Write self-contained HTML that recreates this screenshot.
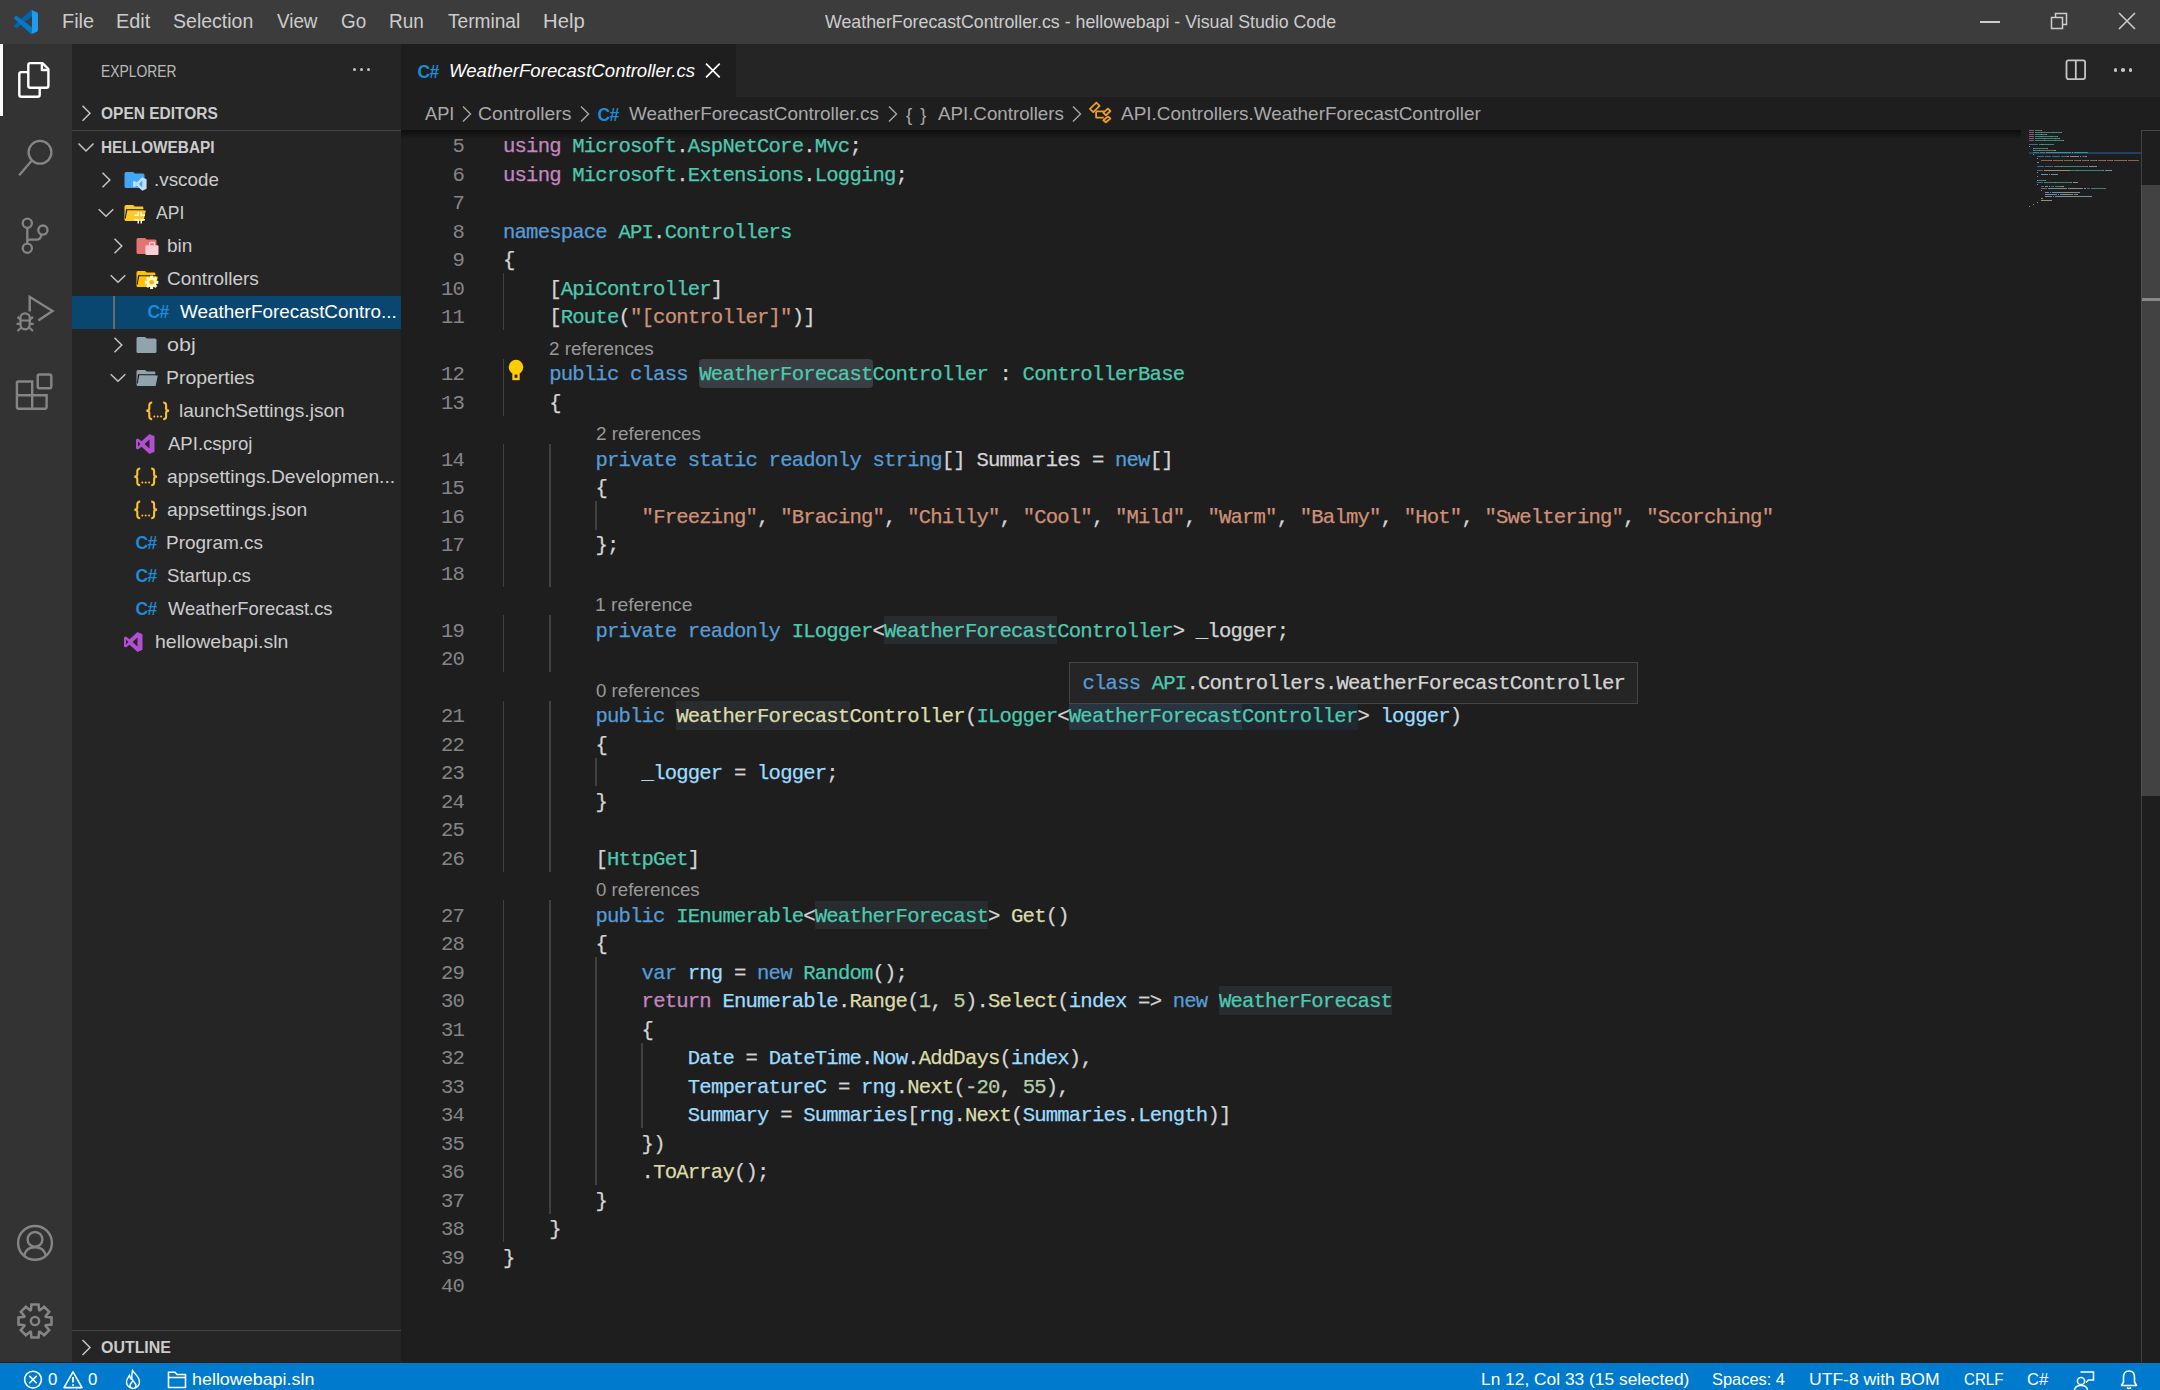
<!DOCTYPE html>
<html><head><meta charset="utf-8"><style>
*{margin:0;padding:0;box-sizing:border-box}
html,body{width:2160px;height:1390px;overflow:hidden;background:#1E1E1E;font-family:"Liberation Sans",sans-serif}
.abs{position:absolute}
.tx{position:absolute;line-height:0;white-space:pre;transform-origin:0 0}
.ln{position:absolute;left:401px;width:63px;text-align:right;font-family:"Liberation Mono",monospace;font-size:20.6px;letter-spacing:-0.81px;line-height:0;color:#858585}
.cl{position:absolute;font-family:"Liberation Mono",monospace;font-size:20.6px;letter-spacing:-0.8124px;line-height:0;color:#D4D4D4;white-space:pre;-webkit-text-stroke:0.25px currentColor}
.g{position:absolute;width:1.5px;height:28.5px;background:#404040}
.k{color:#569CD6} .p{color:#C586C0} .t{color:#4EC9B0} .s{color:#CE9178} .n{color:#B5CEA8} .f{color:#DCDCAA} .v{color:#9CDCFE}
.mm{position:absolute;height:1px;opacity:0.6}
</style></head><body>
<div class="abs" style="left:0;top:0;width:2160px;height:44px;background:#3C3C3C"></div>
<svg class="abs" style="left:14px;top:10px" width="24" height="24" viewBox="0 0 100 100"><path d="M96.46 10.8L75.86 .88C73.47-.27 70.62.21 68.75 2.08L1.3 63.58C-.52 65.24-.51 68.09 1.3 69.75L6.81 74.75C8.3 76.1 10.53 76.2 12.13 74.99L93.36 13.37C96.09 11.3 100 13.25 100 16.67V16.43C100 14.03 98.62 11.84 96.46 10.8Z" fill="#0065A9"/><path d="M96.46 89.2L75.86 99.12C73.47 100.27 70.62 99.79 68.75 97.92L1.3 36.42C-.52 34.76-.51 31.91 1.3 30.25L6.81 25.25C8.3 23.9 10.53 23.8 12.13 25.01L93.36 86.63C96.09 88.7 100 86.75 100 83.33V83.57C100 85.97 98.62 88.16 96.46 89.2Z" fill="#007ACC"/><path d="M75.86 99.13C73.47 100.27 70.62 99.79 68.75 97.92C71.06 100.22 75 98.59 75 95.33V4.67C75 1.41 71.06-.22 68.75 2.08C70.62.21 73.47-.27 75.86.87L96.46 10.78C98.62 11.82 100 14.01 100 16.41V83.59C100 85.99 98.62 88.18 96.46 89.22Z" fill="#1F9CF0"/></svg>
<div class="abs" style="left:1980px;top:21px;width:20px;height:1.5px;background:#CCCCCC"></div>
<svg class="abs" style="left:2049px;top:11px" width="20" height="20" viewBox="0 0 20 20"><path d="M2.5 6.5h11v11h-11z M6.5 6.5V2.5h11v11h-4" fill="none" stroke="#CCCCCC" stroke-width="1.5"/></svg>
<svg class="abs" style="left:2117px;top:11px" width="20" height="20" viewBox="0 0 20 20"><path d="M2 2L18 18M18 2L2 18" stroke="#CCCCCC" stroke-width="1.6"/></svg>
<div class="abs" style="left:0;top:44px;width:72px;height:1318px;background:#333333"></div>
<div class="abs" style="left:0;top:44px;width:3px;height:72px;background:#FFFFFF"></div>

<svg class="abs" style="left:0;top:0" width="72" height="1390" viewBox="0 0 72 1390">
 <g fill="none" stroke="#FFFFFF" stroke-width="2.4" stroke-linejoin="round">
  <path d="M28.3 72.1 H21.3 Q19.3 72.1 19.3 74.1 V94.7 Q19.3 96.7 21.3 96.7 H37.7 Q39.7 96.7 39.7 94.7 V87.8"/>
  <path d="M28.3 65.1 Q28.3 63.1 30.3 63.1 H42.5 L48.4 69 V85.8 Q48.4 87.8 46.4 87.8 H30.3 Q28.3 87.8 28.3 85.8 Z"/>
  <path d="M41.9 63.5 V70 H48.2"/>
 </g>
 <g fill="none" stroke="#858585" stroke-width="2.3">
  <circle cx="40" cy="152.3" r="11.4"/>
  <path d="M31.6 160.8 L19.2 175.2"/>
  <circle cx="27.3" cy="223.3" r="4.6"/>
  <circle cx="27.3" cy="248.3" r="4.6"/>
  <circle cx="42.9" cy="230.1" r="4.6"/>
  <path d="M27.3 228 V243.6"/>
  <path d="M27.3 241.5 Q27.3 239.6 30.5 239.6 H37.5 Q40.5 239.6 41.5 234.6"/>
  <path d="M29.7 311.5 V296.8 L52.5 311 L38.3 320.5" stroke-width="2.4"/>
  <path d="M20.5 317.5 a4.6 4.2 0 0 1 9.2 0 v7 a4.6 4.8 0 0 1 -9.2 0 z M19.4 320.5 H31" stroke-width="2.2"/>
  <path d="M17.5 317 L20.8 319.5 M33 317 L29.7 319.5 M16.6 323.8 H20.5 M29.7 323.8 H33.6 M17.5 331 L20.8 328 M33 331 L29.7 328" stroke-width="2.2"/>
  <path d="M18.5 381.5 H32.2 V408.7 H18.5 Q16.9 408.7 16.9 407.1 V383.1 Q16.9 381.5 18.5 381.5 Z M16.9 395.3 H46.6 V407.1 Q46.6 408.7 45 408.7 H32.2" stroke-width="2.4"/>
  <path d="M39.4 374.5 H49.6 Q51.3 374.5 51.3 376.2 V386.5 Q51.3 388.2 49.6 388.2 H39.4 Q37.7 388.2 37.7 386.5 V376.2 Q37.7 374.5 39.4 374.5 Z" stroke-width="2.4"/>
  <circle cx="35" cy="1242.9" r="16.9" stroke-width="2.4"/>
  <circle cx="35" cy="1239.4" r="7.4" stroke-width="2.4"/>
  <path d="M24.3 1255.5 Q26 1247.2 35 1247.2 Q44 1247.2 45.7 1255.5" stroke-width="2.4"/>
  <path d="M30.89 1310.15 L31.43 1304.48 L38.57 1304.48 L39.11 1310.15 L39.77 1310.42 L44.15 1306.79 L49.21 1311.85 L45.58 1316.23 L45.85 1316.89 L51.52 1317.43 L51.52 1324.57 L45.85 1325.11 L45.58 1325.77 L49.21 1330.15 L44.15 1335.21 L39.77 1331.58 L39.11 1331.85 L38.57 1337.52 L31.43 1337.52 L30.89 1331.85 L30.23 1331.58 L25.85 1335.21 L20.79 1330.15 L24.42 1325.77 L24.15 1325.11 L18.48 1324.57 L18.48 1317.43 L24.15 1316.89 L24.42 1316.23 L20.79 1311.85 L25.85 1306.79 L30.23 1310.42Z" stroke-width="2.5" stroke-linejoin="miter"/>
  <circle cx="35" cy="1321" r="4.1" stroke-width="2.4"/>
 </g>
</svg>
<div class="abs" style="left:72px;top:44px;width:329px;height:1318px;background:#252526"></div>

<div class="abs" style="left:352.7px;top:67.9px;width:3.6px;height:3.6px;border-radius:50%;background:#C5C5C5"></div><div class="abs" style="left:359.7px;top:67.9px;width:3.6px;height:3.6px;border-radius:50%;background:#C5C5C5"></div><div class="abs" style="left:366.7px;top:67.9px;width:3.6px;height:3.6px;border-radius:50%;background:#C5C5C5"></div>
<svg class="abs" style="left:76px;top:101px" width="20" height="24" viewBox="0 0 20 24"><path d="M6.5 4.8 L14 12.3 L6.5 19.8" fill="none" stroke="#C5C5C5" stroke-width="1.5"/></svg>
<div class="abs" style="left:72px;top:130px;width:329px;height:1px;background:#434344"></div>
<svg class="abs" style="left:76px;top:135px" width="20" height="24" viewBox="0 0 20 24"><path d="M2.5 8.5 L10 16 L17.5 8.5" fill="none" stroke="#C5C5C5" stroke-width="1.5"/></svg>
<div class="abs" style="left:72px;top:1330px;width:329px;height:1px;background:#434344"></div>
<svg class="abs" style="left:76px;top:1335px" width="20" height="24" viewBox="0 0 20 24"><path d="M6.5 5 L14 12.5 L6.5 20" fill="none" stroke="#C5C5C5" stroke-width="1.5"/></svg>

<div class="abs" style="left:401px;top:44px;width:1759px;height:53px;background:#252526"></div>
<div class="abs" style="left:401px;top:44px;width:335px;height:53px;background:#1E1E1E"></div>

<div class="tx" style="left:417.5px;top:71.74px;font-weight:bold;color:#1E8BD6;font-size:17.5px;letter-spacing:-0.6px">C#</div>
<svg class="abs" style="left:704px;top:61px" width="18" height="18" viewBox="0 0 18 18"><path d="M2 2.7 L15.7 16.3 M15.7 2.7 L2 16.3" stroke="#FFFFFF" stroke-width="1.7"/></svg>
<svg class="abs" style="left:2064px;top:58px" width="24" height="24" viewBox="0 0 24 24"><rect x="2.5" y="2.3" width="18.6" height="18.8" rx="2" fill="none" stroke="#C5C5C5" stroke-width="1.8"/><path d="M11.8 2.3 V21" stroke="#C5C5C5" stroke-width="1.8"/></svg>
<div class="abs" style="left:2113.75px;top:68.1px;width:3.6px;height:3.6px;border-radius:50%;background:#C5C5C5"></div><div class="abs" style="left:2121.20px;top:68.1px;width:3.6px;height:3.6px;border-radius:50%;background:#C5C5C5"></div><div class="abs" style="left:2128.65px;top:68.1px;width:3.6px;height:3.6px;border-radius:50%;background:#C5C5C5"></div>


<svg class="abs" style="left:460.5px;top:104px" width="12" height="20" viewBox="0 0 12 20"><path d="M2 2.5 L9.5 10 L2 17.5" fill="none" stroke="#A9A9A9" stroke-width="1.4"/></svg><svg class="abs" style="left:578.5px;top:104px" width="12" height="20" viewBox="0 0 12 20"><path d="M2 2.5 L9.5 10 L2 17.5" fill="none" stroke="#A9A9A9" stroke-width="1.4"/></svg>
<div class="tx" style="left:597.5px;top:114.74px;font-weight:bold;color:#1E8BD6;font-size:17.5px;letter-spacing:-0.6px">C#</div>
<svg class="abs" style="left:887px;top:104px" width="12" height="20" viewBox="0 0 12 20"><path d="M2 2.5 L9.5 10 L2 17.5" fill="none" stroke="#A9A9A9" stroke-width="1.4"/></svg>
<div class="tx" style="left:906px;top:114.62px;font-size:18.4px;color:#A9A9A9;letter-spacing:1.5px">{ }</div>
<svg class="abs" style="left:1071px;top:104px" width="12" height="20" viewBox="0 0 12 20"><path d="M2 2.5 L9.5 10 L2 17.5" fill="none" stroke="#A9A9A9" stroke-width="1.4"/></svg>
<svg class="abs" style="left:1080px;top:98px" width="50" height="30" viewBox="0 0 50 30" fill="none" stroke="#EE9D28" stroke-width="1.8" stroke-linejoin="round"><path d="M9.9 10.9 L16.4 4.7 L19.6 7.9 L13.3 14.2 Z"/><path d="M23.3 14.6 L27.9 10.6 L30.4 13 L25.9 17.4 Z"/><path d="M23.3 22.2 L27.8 18.6 L30.4 20.5 L25.9 24.3 Z"/><path d="M16.1 13.4 V19.6 H23.8 M16.1 13.4 H24"/></svg>
<div class="abs" style="left:401px;top:130px;width:1620px;height:9px;background:linear-gradient(rgba(0,0,0,0.55),rgba(0,0,0,0))"></div>

<div class="abs" style="left:72px;top:295.5px;width:329px;height:33px;background:#094771"></div>
<div class="abs" style="left:113px;top:295.5px;width:1.5px;height:33px;background:#6A6A6A"></div>
<svg class="abs" style="left:99.2px;top:168.0px" width="16" height="24" viewBox="0 0 16 24"><path d="M3.5 4.8 L10.8 12 L3.5 19.2" fill="none" stroke="#C5C5C5" stroke-width="1.5"/></svg>
<svg class="abs" style="left:123.5px;top:169.0px" width="26" height="24" viewBox="0 0 26 24"><path d="M2 2.9 H9 L10.8 4.6 H19 Q20.5 4.6 20.5 6.1 V17.5 Q20.5 19 19 19 H2 Q0.5 19 0.5 17.5 V4.4 Q0.5 2.9 2 2.9 Z" fill="#42A5F5"/><path d="M18.3 8.2 L22.6 10.2 V19.8 L18.3 21.8 L12.6 16.6 L10.3 18.3 L9 17.6 V12.4 L10.3 11.7 L12.6 13.4 Z M18.3 11.6 L15 15 L18.3 18.4 Z" fill="#BBDEFB" fill-rule="evenodd"/></svg>
<svg class="abs" style="left:95.8px;top:201.0px" width="20" height="24" viewBox="0 0 20 24"><path d="M2.7 8.2 L10 15.3 L17.3 8.2" fill="none" stroke="#C5C5C5" stroke-width="1.5"/></svg>
<svg class="abs" style="left:123.5px;top:202.0px" width="26" height="24" viewBox="0 0 26 24"><path d="M2 2.9 H9 L10.8 4.6 H18 Q19.4 4.6 19.4 6 V17.5 Q19.4 19 18 19 H2 Q0.5 19 0.5 17.5 V4.4 Q0.5 2.9 2 2.9 Z" fill="#FFCA28"/><path d="M21.5 7.9 H2.6 L1.5 16.5" fill="none" stroke="#1A1A1A" stroke-width="1.3"/><path d="M3.4 8.6 H21.8 L19.6 19 H1.3 Z" fill="#FFCA28"/><path d="M10.5 12.5 h3 v-2.5 h1.5 v4 h-4.5z M16.5 10 h1.5 v2.5 h3 v1.5 h-4.5z M10.5 17 h4.5 v4.5 h-1.5 v-3 h-3z M16.5 17 h4.5 v1.5 h-3 v3 h-1.5z" fill="#FFF8E1"/></svg>
<svg class="abs" style="left:111.2px;top:234.0px" width="16" height="24" viewBox="0 0 16 24"><path d="M3.5 4.8 L10.8 12 L3.5 19.2" fill="none" stroke="#C5C5C5" stroke-width="1.5"/></svg>
<svg class="abs" style="left:135.5px;top:235.0px" width="26" height="24" viewBox="0 0 26 24"><path d="M2 2.9 H9 L10.8 4.6 H19 Q20.5 4.6 20.5 6.1 V17.5 Q20.5 19 19 19 H2 Q0.5 19 0.5 17.5 V4.4 Q0.5 2.9 2 2.9 Z" fill="#E57373"/><rect x="9.4" y="10.2" width="13.1" height="9.7" rx="1.2" fill="#FFCDD2"/><path d="M13.6 10.5 V8.6 Q13.6 7.5 14.7 7.5 H17.4 Q18.5 7.5 18.5 8.6 V10.5" fill="none" stroke="#FFCDD2" stroke-width="1.4"/></svg>
<svg class="abs" style="left:107.8px;top:267.0px" width="20" height="24" viewBox="0 0 20 24"><path d="M2.7 8.2 L10 15.3 L17.3 8.2" fill="none" stroke="#C5C5C5" stroke-width="1.5"/></svg>
<svg class="abs" style="left:135.5px;top:268.0px" width="26" height="24" viewBox="0 0 26 24"><path d="M2 2.9 H9 L10.8 4.6 H18 Q19.4 4.6 19.4 6 V17.5 Q19.4 19 18 19 H2 Q0.5 19 0.5 17.5 V4.4 Q0.5 2.9 2 2.9 Z" fill="#FFC107"/><path d="M21.5 7.9 H2.6 L1.5 16.5" fill="none" stroke="#1A1A1A" stroke-width="1.3"/><path d="M3.4 8.6 H21.8 L19.6 19 H1.3 Z" fill="#FFC107"/><circle cx="15.6" cy="14.3" r="4.9" fill="#FFF9C4"/><rect x="-1.5" y="-6.7" width="3" height="3" fill="#FFF9C4" transform="translate(15.6 14.3) rotate(0)"/><rect x="-1.5" y="-6.7" width="3" height="3" fill="#FFF9C4" transform="translate(15.6 14.3) rotate(45)"/><rect x="-1.5" y="-6.7" width="3" height="3" fill="#FFF9C4" transform="translate(15.6 14.3) rotate(90)"/><rect x="-1.5" y="-6.7" width="3" height="3" fill="#FFF9C4" transform="translate(15.6 14.3) rotate(135)"/><rect x="-1.5" y="-6.7" width="3" height="3" fill="#FFF9C4" transform="translate(15.6 14.3) rotate(180)"/><rect x="-1.5" y="-6.7" width="3" height="3" fill="#FFF9C4" transform="translate(15.6 14.3) rotate(225)"/><rect x="-1.5" y="-6.7" width="3" height="3" fill="#FFF9C4" transform="translate(15.6 14.3) rotate(270)"/><rect x="-1.5" y="-6.7" width="3" height="3" fill="#FFF9C4" transform="translate(15.6 14.3) rotate(315)"/><circle cx="15.6" cy="14.3" r="2.3" fill="#FFB300"/></svg>
<div class="tx" style="left:147.5px;top:312.44px;font-size:17.5px;font-weight:bold;color:#1E8BD6;letter-spacing:-0.6px">C#</div>
<svg class="abs" style="left:111.2px;top:333.0px" width="16" height="24" viewBox="0 0 16 24"><path d="M3.5 4.8 L10.8 12 L3.5 19.2" fill="none" stroke="#C5C5C5" stroke-width="1.5"/></svg>
<svg class="abs" style="left:135.5px;top:334.0px" width="26" height="24" viewBox="0 0 26 24"><path d="M2 2.9 H9 L10.8 4.6 H19 Q20.5 4.6 20.5 6.1 V17.5 Q20.5 19 19 19 H2 Q0.5 19 0.5 17.5 V4.4 Q0.5 2.9 2 2.9 Z" fill="#90A4AE"/></svg>
<svg class="abs" style="left:107.8px;top:366.0px" width="20" height="24" viewBox="0 0 20 24"><path d="M2.7 8.2 L10 15.3 L17.3 8.2" fill="none" stroke="#C5C5C5" stroke-width="1.5"/></svg>
<svg class="abs" style="left:135.5px;top:367.0px" width="26" height="24" viewBox="0 0 26 24"><path d="M2 2.9 H9 L10.8 4.6 H18 Q19.4 4.6 19.4 6 V17.5 Q19.4 19 18 19 H2 Q0.5 19 0.5 17.5 V4.4 Q0.5 2.9 2 2.9 Z" fill="#90A4AE"/><path d="M21.5 7.9 H2.6 L1.5 16.5" fill="none" stroke="#1A1A1A" stroke-width="1.3"/><path d="M3.4 8.6 H21.8 L19.6 19 H1.3 Z" fill="#90A4AE"/></svg>
<svg class="abs" style="left:145.2px;top:401.0px" width="26" height="20" viewBox="0 0 26 20"><path d="M7.2 1.5 Q4.3 1.5 4.3 4.2 V7.6 Q4.3 9.8 1.3 9.8 Q4.3 9.8 4.3 12 V15.6 Q4.3 18.3 7.2 18.3 M18.2 1.5 Q21.1 1.5 21.1 4.2 V7.6 Q21.1 9.8 24.1 9.8 Q21.1 9.8 21.1 12 V15.6 Q21.1 18.3 18.2 18.3" fill="none" stroke="#FBC02D" stroke-width="2.1"/><circle cx="9.3" cy="15.6" r="1" fill="#FBC02D"/><circle cx="12.7" cy="15.6" r="1" fill="#FBC02D"/><circle cx="16.1" cy="15.6" r="1" fill="#FBC02D"/></svg>
<svg class="abs" style="left:135px;top:433.0px" width="22" height="22" viewBox="0 0 22 22"><path d="M14.5 1 L19.5 3.2 V18.8 L14.5 21 L6.5 13.8 L3 16.5 L1 15.5 V6.5 L3 5.5 L6.5 8.2 Z M14.5 6.5 L9.6 11 L14.5 15.5 Z M3 8.5 V13.5 L5.3 11 Z" fill="#B04FD0" fill-rule="evenodd"/></svg>
<svg class="abs" style="left:133.2px;top:467.0px" width="26" height="20" viewBox="0 0 26 20"><path d="M7.2 1.5 Q4.3 1.5 4.3 4.2 V7.6 Q4.3 9.8 1.3 9.8 Q4.3 9.8 4.3 12 V15.6 Q4.3 18.3 7.2 18.3 M18.2 1.5 Q21.1 1.5 21.1 4.2 V7.6 Q21.1 9.8 24.1 9.8 Q21.1 9.8 21.1 12 V15.6 Q21.1 18.3 18.2 18.3" fill="none" stroke="#FBC02D" stroke-width="2.1"/><circle cx="9.3" cy="15.6" r="1" fill="#FBC02D"/><circle cx="12.7" cy="15.6" r="1" fill="#FBC02D"/><circle cx="16.1" cy="15.6" r="1" fill="#FBC02D"/></svg>
<svg class="abs" style="left:133.2px;top:500.0px" width="26" height="20" viewBox="0 0 26 20"><path d="M7.2 1.5 Q4.3 1.5 4.3 4.2 V7.6 Q4.3 9.8 1.3 9.8 Q4.3 9.8 4.3 12 V15.6 Q4.3 18.3 7.2 18.3 M18.2 1.5 Q21.1 1.5 21.1 4.2 V7.6 Q21.1 9.8 24.1 9.8 Q21.1 9.8 21.1 12 V15.6 Q21.1 18.3 18.2 18.3" fill="none" stroke="#FBC02D" stroke-width="2.1"/><circle cx="9.3" cy="15.6" r="1" fill="#FBC02D"/><circle cx="12.7" cy="15.6" r="1" fill="#FBC02D"/><circle cx="16.1" cy="15.6" r="1" fill="#FBC02D"/></svg>
<div class="tx" style="left:135.5px;top:543.44px;font-size:17.5px;font-weight:bold;color:#1E8BD6;letter-spacing:-0.6px">C#</div>
<div class="tx" style="left:135.5px;top:576.44px;font-size:17.5px;font-weight:bold;color:#1E8BD6;letter-spacing:-0.6px">C#</div>
<div class="tx" style="left:135.5px;top:609.44px;font-size:17.5px;font-weight:bold;color:#1E8BD6;letter-spacing:-0.6px">C#</div>
<svg class="abs" style="left:123px;top:631.0px" width="22" height="22" viewBox="0 0 22 22"><path d="M14.5 1 L19.5 3.2 V18.8 L14.5 21 L6.5 13.8 L3 16.5 L1 15.5 V6.5 L3 5.5 L6.5 8.2 Z M14.5 6.5 L9.6 11 L14.5 15.5 Z M3 8.5 V13.5 L5.3 11 Z" fill="#B04FD0" fill-rule="evenodd"/></svg>
<div class="abs" style="left:699.35px;top:359.00px;width:173.25px;height:28.6px;background:#3A3D41;border-radius:4px;"></div>
<div class="abs" style="left:884.15px;top:615.50px;width:173.25px;height:28.6px;background:#282C2F;"></div>
<div class="abs" style="left:676.25px;top:701.00px;width:173.25px;height:28.6px;background:#282C2F;"></div>
<div class="abs" style="left:1068.95px;top:701.00px;width:288.75px;height:28.6px;background:#1F2830;"></div>
<div class="abs" style="left:1068.95px;top:701.00px;width:173.25px;height:28.6px;background:#283440;"></div>
<div class="abs" style="left:814.85px;top:900.50px;width:173.25px;height:28.6px;background:#282C2F;"></div>
<div class="abs" style="left:1219.10px;top:986.00px;width:173.25px;height:28.6px;background:#282C2F;"></div>
<div class="g" style="left:502.80px;top:273.20px"></div>
<div class="g" style="left:502.80px;top:301.70px"></div>
<div class="g" style="left:502.80px;top:358.70px"></div>
<div class="g" style="left:502.80px;top:387.20px"></div>
<div class="g" style="left:502.80px;top:444.20px"></div>
<div class="g" style="left:549.00px;top:444.20px"></div>
<div class="g" style="left:502.80px;top:472.70px"></div>
<div class="g" style="left:549.00px;top:472.70px"></div>
<div class="g" style="left:502.80px;top:501.20px"></div>
<div class="g" style="left:549.00px;top:501.20px"></div>
<div class="g" style="left:595.20px;top:501.20px"></div>
<div class="g" style="left:502.80px;top:529.70px"></div>
<div class="g" style="left:549.00px;top:529.70px"></div>
<div class="g" style="left:502.80px;top:558.20px"></div>
<div class="g" style="left:549.00px;top:558.20px"></div>
<div class="g" style="left:502.80px;top:615.20px"></div>
<div class="g" style="left:549.00px;top:615.20px"></div>
<div class="g" style="left:502.80px;top:643.70px"></div>
<div class="g" style="left:549.00px;top:643.70px"></div>
<div class="g" style="left:502.80px;top:700.70px"></div>
<div class="g" style="left:549.00px;top:700.70px"></div>
<div class="g" style="left:502.80px;top:729.20px"></div>
<div class="g" style="left:549.00px;top:729.20px"></div>
<div class="g" style="left:502.80px;top:757.70px"></div>
<div class="g" style="left:549.00px;top:757.70px"></div>
<div class="g" style="left:595.20px;top:757.70px"></div>
<div class="g" style="left:502.80px;top:786.20px"></div>
<div class="g" style="left:549.00px;top:786.20px"></div>
<div class="g" style="left:502.80px;top:814.70px"></div>
<div class="g" style="left:549.00px;top:814.70px"></div>
<div class="g" style="left:502.80px;top:843.20px"></div>
<div class="g" style="left:549.00px;top:843.20px"></div>
<div class="g" style="left:502.80px;top:900.20px"></div>
<div class="g" style="left:549.00px;top:900.20px"></div>
<div class="g" style="left:502.80px;top:928.70px"></div>
<div class="g" style="left:549.00px;top:928.70px"></div>
<div class="g" style="left:502.80px;top:957.20px"></div>
<div class="g" style="left:549.00px;top:957.20px"></div>
<div class="g" style="left:595.20px;top:957.20px"></div>
<div class="g" style="left:502.80px;top:985.70px"></div>
<div class="g" style="left:549.00px;top:985.70px"></div>
<div class="g" style="left:595.20px;top:985.70px"></div>
<div class="g" style="left:502.80px;top:1014.20px"></div>
<div class="g" style="left:549.00px;top:1014.20px"></div>
<div class="g" style="left:595.20px;top:1014.20px"></div>
<div class="g" style="left:502.80px;top:1042.70px"></div>
<div class="g" style="left:549.00px;top:1042.70px"></div>
<div class="g" style="left:595.20px;top:1042.70px"></div>
<div class="g" style="left:641.40px;top:1042.70px"></div>
<div class="g" style="left:502.80px;top:1071.20px"></div>
<div class="g" style="left:549.00px;top:1071.20px"></div>
<div class="g" style="left:595.20px;top:1071.20px"></div>
<div class="g" style="left:641.40px;top:1071.20px"></div>
<div class="g" style="left:502.80px;top:1099.70px"></div>
<div class="g" style="left:549.00px;top:1099.70px"></div>
<div class="g" style="left:595.20px;top:1099.70px"></div>
<div class="g" style="left:641.40px;top:1099.70px"></div>
<div class="g" style="left:502.80px;top:1128.20px"></div>
<div class="g" style="left:549.00px;top:1128.20px"></div>
<div class="g" style="left:595.20px;top:1128.20px"></div>
<div class="g" style="left:502.80px;top:1156.70px"></div>
<div class="g" style="left:549.00px;top:1156.70px"></div>
<div class="g" style="left:595.20px;top:1156.70px"></div>
<div class="g" style="left:502.80px;top:1185.20px"></div>
<div class="g" style="left:549.00px;top:1185.20px"></div>
<div class="g" style="left:502.80px;top:1213.70px"></div>
<div class="ln" style="top:147.02px">5</div>
<div class="cl" style="top:147.02px;left:503.00px"><span class="p">using</span> <span class="t">Microsoft</span>.<span class="t">AspNetCore</span>.<span class="t">Mvc</span>;</div>
<div class="ln" style="top:175.52px">6</div>
<div class="cl" style="top:175.52px;left:503.00px"><span class="p">using</span> <span class="t">Microsoft</span>.<span class="t">Extensions</span>.<span class="t">Logging</span>;</div>
<div class="ln" style="top:204.02px">7</div>
<div class="ln" style="top:232.52px">8</div>
<div class="cl" style="top:232.52px;left:503.00px"><span class="k">namespace</span> <span class="t">API</span>.<span class="t">Controllers</span></div>
<div class="ln" style="top:261.02px">9</div>
<div class="cl" style="top:261.02px;left:503.00px">{</div>
<div class="ln" style="top:289.52px">10</div>
<div class="cl" style="top:289.52px;left:549.20px">[<span class="t">ApiController</span>]</div>
<div class="ln" style="top:318.02px">11</div>
<div class="cl" style="top:318.02px;left:549.20px">[<span class="t">Route</span>(<span class="s">"[controller]"</span>)]</div>
<div class="ln" style="top:375.02px">12</div>
<div class="cl" style="top:375.02px;left:549.20px"><span class="k">public</span> <span class="k">class</span> <span class="t">WeatherForecastController</span> : <span class="t">ControllerBase</span></div>
<div class="ln" style="top:403.52px">13</div>
<div class="cl" style="top:403.52px;left:549.20px">{</div>
<div class="ln" style="top:460.52px">14</div>
<div class="cl" style="top:460.52px;left:595.40px"><span class="k">private</span> <span class="k">static</span> <span class="k">readonly</span> <span class="k">string</span>[] Summaries = <span class="k">new</span>[]</div>
<div class="ln" style="top:489.02px">15</div>
<div class="cl" style="top:489.02px;left:595.40px">{</div>
<div class="ln" style="top:517.52px">16</div>
<div class="cl" style="top:517.52px;left:641.60px"><span class="s">"Freezing"</span>, <span class="s">"Bracing"</span>, <span class="s">"Chilly"</span>, <span class="s">"Cool"</span>, <span class="s">"Mild"</span>, <span class="s">"Warm"</span>, <span class="s">"Balmy"</span>, <span class="s">"Hot"</span>, <span class="s">"Sweltering"</span>, <span class="s">"Scorching"</span></div>
<div class="ln" style="top:546.02px">17</div>
<div class="cl" style="top:546.02px;left:595.40px">};</div>
<div class="ln" style="top:574.52px">18</div>
<div class="ln" style="top:631.52px">19</div>
<div class="cl" style="top:631.52px;left:595.40px"><span class="k">private</span> <span class="k">readonly</span> <span class="t">ILogger</span>&lt;<span class="t">WeatherForecastController</span>&gt; _logger;</div>
<div class="ln" style="top:660.02px">20</div>
<div class="ln" style="top:717.02px">21</div>
<div class="cl" style="top:717.02px;left:595.40px"><span class="k">public</span> <span class="f">WeatherForecastController</span>(<span class="t">ILogger</span>&lt;<span class="t">WeatherForecastController</span>&gt; <span class="v">logger</span>)</div>
<div class="ln" style="top:745.52px">22</div>
<div class="cl" style="top:745.52px;left:595.40px">{</div>
<div class="ln" style="top:774.02px">23</div>
<div class="cl" style="top:774.02px;left:641.60px"><span class="v">_logger</span> = <span class="v">logger</span>;</div>
<div class="ln" style="top:802.52px">24</div>
<div class="cl" style="top:802.52px;left:595.40px">}</div>
<div class="ln" style="top:831.02px">25</div>
<div class="ln" style="top:859.52px">26</div>
<div class="cl" style="top:859.52px;left:595.40px">[<span class="t">HttpGet</span>]</div>
<div class="ln" style="top:916.52px">27</div>
<div class="cl" style="top:916.52px;left:595.40px"><span class="k">public</span> <span class="t">IEnumerable</span>&lt;<span class="t">WeatherForecast</span>&gt; <span class="f">Get</span>()</div>
<div class="ln" style="top:945.02px">28</div>
<div class="cl" style="top:945.02px;left:595.40px">{</div>
<div class="ln" style="top:973.52px">29</div>
<div class="cl" style="top:973.52px;left:641.60px"><span class="k">var</span> <span class="v">rng</span> = <span class="k">new</span> <span class="t">Random</span>();</div>
<div class="ln" style="top:1002.02px">30</div>
<div class="cl" style="top:1002.02px;left:641.60px"><span class="p">return</span> <span class="v">Enumerable</span>.<span class="f">Range</span>(<span class="n">1</span>, <span class="n">5</span>).<span class="f">Select</span>(<span class="v">index</span> =&gt; <span class="k">new</span> <span class="t">WeatherForecast</span></div>
<div class="ln" style="top:1030.52px">31</div>
<div class="cl" style="top:1030.52px;left:641.60px">{</div>
<div class="ln" style="top:1059.02px">32</div>
<div class="cl" style="top:1059.02px;left:687.80px"><span class="v">Date</span> = <span class="v">DateTime</span>.<span class="v">Now</span>.<span class="f">AddDays</span>(<span class="v">index</span>),</div>
<div class="ln" style="top:1087.52px">33</div>
<div class="cl" style="top:1087.52px;left:687.80px"><span class="v">TemperatureC</span> = <span class="v">rng</span>.<span class="f">Next</span>(<span class="n">-20</span>, <span class="n">55</span>),</div>
<div class="ln" style="top:1116.02px">34</div>
<div class="cl" style="top:1116.02px;left:687.80px"><span class="v">Summary</span> = <span class="v">Summaries</span>[<span class="v">rng</span>.<span class="f">Next</span>(<span class="v">Summaries</span>.<span class="v">Length</span>)]</div>
<div class="ln" style="top:1144.52px">35</div>
<div class="cl" style="top:1144.52px;left:641.60px">})</div>
<div class="ln" style="top:1173.02px">36</div>
<div class="cl" style="top:1173.02px;left:641.60px">.<span class="f">ToArray</span>();</div>
<div class="ln" style="top:1201.52px">37</div>
<div class="cl" style="top:1201.52px;left:595.40px">}</div>
<div class="ln" style="top:1230.02px">38</div>
<div class="cl" style="top:1230.02px;left:549.20px">}</div>
<div class="ln" style="top:1258.52px">39</div>
<div class="cl" style="top:1258.52px;left:503.00px">}</div>
<div class="ln" style="top:1287.02px">40</div>

<svg class="abs" style="left:506px;top:358px" width="20" height="24" viewBox="0 0 20 24"><circle cx="10" cy="9.1" r="7.3" fill="#FFCC00"/><path d="M6.3 12 H13.7 V22.2 H6.3 Z" fill="#FFCC00"/><rect x="8.6" y="16.6" width="2.8" height="3.2" fill="#1E1E1E"/></svg>

<div class="abs" style="left:2029px;top:152.3px;width:112px;height:2px;background:#23415F"></div>
<div class="mm" style="left:2029px;top:130px;width:5px;background:#C586C0"></div>
<div class="mm" style="left:2035px;top:130px;width:6px;background:#4EC9B0"></div>
<div class="mm" style="left:2041px;top:130px;width:1px;background:#D4D4D4"></div>
<div class="mm" style="left:2029px;top:132px;width:5px;background:#C586C0"></div>
<div class="mm" style="left:2035px;top:132px;width:6px;background:#4EC9B0"></div>
<div class="mm" style="left:2041px;top:132px;width:1px;background:#D4D4D4"></div>
<div class="mm" style="left:2042px;top:132px;width:11px;background:#4EC9B0"></div>
<div class="mm" style="left:2053px;top:132px;width:1px;background:#D4D4D4"></div>
<div class="mm" style="left:2054px;top:132px;width:7px;background:#4EC9B0"></div>
<div class="mm" style="left:2061px;top:132px;width:1px;background:#D4D4D4"></div>
<div class="mm" style="left:2029px;top:134px;width:5px;background:#C586C0"></div>
<div class="mm" style="left:2035px;top:134px;width:6px;background:#4EC9B0"></div>
<div class="mm" style="left:2041px;top:134px;width:1px;background:#D4D4D4"></div>
<div class="mm" style="left:2042px;top:134px;width:4px;background:#4EC9B0"></div>
<div class="mm" style="left:2046px;top:134px;width:1px;background:#D4D4D4"></div>
<div class="mm" style="left:2029px;top:136px;width:5px;background:#C586C0"></div>
<div class="mm" style="left:2035px;top:136px;width:6px;background:#4EC9B0"></div>
<div class="mm" style="left:2041px;top:136px;width:1px;background:#D4D4D4"></div>
<div class="mm" style="left:2042px;top:136px;width:9px;background:#4EC9B0"></div>
<div class="mm" style="left:2051px;top:136px;width:1px;background:#D4D4D4"></div>
<div class="mm" style="left:2052px;top:136px;width:5px;background:#4EC9B0"></div>
<div class="mm" style="left:2057px;top:136px;width:1px;background:#D4D4D4"></div>
<div class="mm" style="left:2029px;top:138px;width:5px;background:#C586C0"></div>
<div class="mm" style="left:2035px;top:138px;width:9px;background:#4EC9B0"></div>
<div class="mm" style="left:2044px;top:138px;width:1px;background:#D4D4D4"></div>
<div class="mm" style="left:2045px;top:138px;width:10px;background:#4EC9B0"></div>
<div class="mm" style="left:2055px;top:138px;width:1px;background:#D4D4D4"></div>
<div class="mm" style="left:2056px;top:138px;width:3px;background:#4EC9B0"></div>
<div class="mm" style="left:2059px;top:138px;width:1px;background:#D4D4D4"></div>
<div class="mm" style="left:2029px;top:140px;width:5px;background:#C586C0"></div>
<div class="mm" style="left:2035px;top:140px;width:9px;background:#4EC9B0"></div>
<div class="mm" style="left:2044px;top:140px;width:1px;background:#D4D4D4"></div>
<div class="mm" style="left:2045px;top:140px;width:10px;background:#4EC9B0"></div>
<div class="mm" style="left:2055px;top:140px;width:1px;background:#D4D4D4"></div>
<div class="mm" style="left:2056px;top:140px;width:7px;background:#4EC9B0"></div>
<div class="mm" style="left:2063px;top:140px;width:1px;background:#D4D4D4"></div>
<div class="mm" style="left:2029px;top:144px;width:9px;background:#569CD6"></div>
<div class="mm" style="left:2039px;top:144px;width:3px;background:#4EC9B0"></div>
<div class="mm" style="left:2042px;top:144px;width:1px;background:#D4D4D4"></div>
<div class="mm" style="left:2043px;top:144px;width:11px;background:#4EC9B0"></div>
<div class="mm" style="left:2029px;top:146px;width:1px;background:#D4D4D4"></div>
<div class="mm" style="left:2033px;top:148px;width:1px;background:#D4D4D4"></div>
<div class="mm" style="left:2034px;top:148px;width:13px;background:#4EC9B0"></div>
<div class="mm" style="left:2047px;top:148px;width:1px;background:#D4D4D4"></div>
<div class="mm" style="left:2033px;top:150px;width:1px;background:#D4D4D4"></div>
<div class="mm" style="left:2034px;top:150px;width:5px;background:#4EC9B0"></div>
<div class="mm" style="left:2039px;top:150px;width:1px;background:#D4D4D4"></div>
<div class="mm" style="left:2040px;top:150px;width:14px;background:#CE9178"></div>
<div class="mm" style="left:2054px;top:150px;width:2px;background:#D4D4D4"></div>
<div class="mm" style="left:2033px;top:152px;width:6px;background:#569CD6"></div>
<div class="mm" style="left:2040px;top:152px;width:5px;background:#569CD6"></div>
<div class="mm" style="left:2046px;top:152px;width:25px;background:#4EC9B0"></div>
<div class="mm" style="left:2072px;top:152px;width:1px;background:#D4D4D4"></div>
<div class="mm" style="left:2074px;top:152px;width:14px;background:#4EC9B0"></div>
<div class="mm" style="left:2033px;top:154px;width:1px;background:#D4D4D4"></div>
<div class="mm" style="left:2037px;top:156px;width:7px;background:#569CD6"></div>
<div class="mm" style="left:2045px;top:156px;width:6px;background:#569CD6"></div>
<div class="mm" style="left:2052px;top:156px;width:8px;background:#569CD6"></div>
<div class="mm" style="left:2061px;top:156px;width:6px;background:#569CD6"></div>
<div class="mm" style="left:2067px;top:156px;width:2px;background:#D4D4D4"></div>
<div class="mm" style="left:2070px;top:156px;width:9px;background:#D4D4D4"></div>
<div class="mm" style="left:2080px;top:156px;width:1px;background:#D4D4D4"></div>
<div class="mm" style="left:2082px;top:156px;width:3px;background:#569CD6"></div>
<div class="mm" style="left:2085px;top:156px;width:2px;background:#D4D4D4"></div>
<div class="mm" style="left:2037px;top:158px;width:1px;background:#D4D4D4"></div>
<div class="mm" style="left:2041px;top:160px;width:10px;background:#CE9178"></div>
<div class="mm" style="left:2051px;top:160px;width:1px;background:#D4D4D4"></div>
<div class="mm" style="left:2053px;top:160px;width:9px;background:#CE9178"></div>
<div class="mm" style="left:2062px;top:160px;width:1px;background:#D4D4D4"></div>
<div class="mm" style="left:2064px;top:160px;width:8px;background:#CE9178"></div>
<div class="mm" style="left:2072px;top:160px;width:1px;background:#D4D4D4"></div>
<div class="mm" style="left:2074px;top:160px;width:6px;background:#CE9178"></div>
<div class="mm" style="left:2080px;top:160px;width:1px;background:#D4D4D4"></div>
<div class="mm" style="left:2082px;top:160px;width:6px;background:#CE9178"></div>
<div class="mm" style="left:2088px;top:160px;width:1px;background:#D4D4D4"></div>
<div class="mm" style="left:2090px;top:160px;width:6px;background:#CE9178"></div>
<div class="mm" style="left:2096px;top:160px;width:1px;background:#D4D4D4"></div>
<div class="mm" style="left:2098px;top:160px;width:7px;background:#CE9178"></div>
<div class="mm" style="left:2105px;top:160px;width:1px;background:#D4D4D4"></div>
<div class="mm" style="left:2107px;top:160px;width:5px;background:#CE9178"></div>
<div class="mm" style="left:2112px;top:160px;width:1px;background:#D4D4D4"></div>
<div class="mm" style="left:2114px;top:160px;width:12px;background:#CE9178"></div>
<div class="mm" style="left:2126px;top:160px;width:1px;background:#D4D4D4"></div>
<div class="mm" style="left:2128px;top:160px;width:11px;background:#CE9178"></div>
<div class="mm" style="left:2037px;top:162px;width:2px;background:#D4D4D4"></div>
<div class="mm" style="left:2037px;top:166px;width:7px;background:#569CD6"></div>
<div class="mm" style="left:2045px;top:166px;width:8px;background:#569CD6"></div>
<div class="mm" style="left:2054px;top:166px;width:7px;background:#4EC9B0"></div>
<div class="mm" style="left:2061px;top:166px;width:1px;background:#D4D4D4"></div>
<div class="mm" style="left:2062px;top:166px;width:25px;background:#4EC9B0"></div>
<div class="mm" style="left:2087px;top:166px;width:1px;background:#D4D4D4"></div>
<div class="mm" style="left:2089px;top:166px;width:8px;background:#D4D4D4"></div>
<div class="mm" style="left:2037px;top:170px;width:6px;background:#569CD6"></div>
<div class="mm" style="left:2044px;top:170px;width:25px;background:#DCDCAA"></div>
<div class="mm" style="left:2069px;top:170px;width:1px;background:#D4D4D4"></div>
<div class="mm" style="left:2070px;top:170px;width:7px;background:#4EC9B0"></div>
<div class="mm" style="left:2077px;top:170px;width:1px;background:#D4D4D4"></div>
<div class="mm" style="left:2078px;top:170px;width:25px;background:#4EC9B0"></div>
<div class="mm" style="left:2103px;top:170px;width:1px;background:#D4D4D4"></div>
<div class="mm" style="left:2105px;top:170px;width:6px;background:#9CDCFE"></div>
<div class="mm" style="left:2111px;top:170px;width:1px;background:#D4D4D4"></div>
<div class="mm" style="left:2037px;top:172px;width:1px;background:#D4D4D4"></div>
<div class="mm" style="left:2041px;top:174px;width:7px;background:#9CDCFE"></div>
<div class="mm" style="left:2049px;top:174px;width:1px;background:#D4D4D4"></div>
<div class="mm" style="left:2051px;top:174px;width:6px;background:#9CDCFE"></div>
<div class="mm" style="left:2057px;top:174px;width:1px;background:#D4D4D4"></div>
<div class="mm" style="left:2037px;top:176px;width:1px;background:#D4D4D4"></div>
<div class="mm" style="left:2037px;top:180px;width:1px;background:#D4D4D4"></div>
<div class="mm" style="left:2038px;top:180px;width:7px;background:#4EC9B0"></div>
<div class="mm" style="left:2045px;top:180px;width:1px;background:#D4D4D4"></div>
<div class="mm" style="left:2037px;top:182px;width:6px;background:#569CD6"></div>
<div class="mm" style="left:2044px;top:182px;width:11px;background:#4EC9B0"></div>
<div class="mm" style="left:2055px;top:182px;width:1px;background:#D4D4D4"></div>
<div class="mm" style="left:2056px;top:182px;width:15px;background:#4EC9B0"></div>
<div class="mm" style="left:2071px;top:182px;width:1px;background:#D4D4D4"></div>
<div class="mm" style="left:2073px;top:182px;width:3px;background:#DCDCAA"></div>
<div class="mm" style="left:2076px;top:182px;width:2px;background:#D4D4D4"></div>
<div class="mm" style="left:2037px;top:184px;width:1px;background:#D4D4D4"></div>
<div class="mm" style="left:2041px;top:186px;width:3px;background:#569CD6"></div>
<div class="mm" style="left:2045px;top:186px;width:3px;background:#9CDCFE"></div>
<div class="mm" style="left:2049px;top:186px;width:1px;background:#D4D4D4"></div>
<div class="mm" style="left:2051px;top:186px;width:3px;background:#569CD6"></div>
<div class="mm" style="left:2055px;top:186px;width:6px;background:#4EC9B0"></div>
<div class="mm" style="left:2061px;top:186px;width:3px;background:#D4D4D4"></div>
<div class="mm" style="left:2041px;top:188px;width:6px;background:#C586C0"></div>
<div class="mm" style="left:2048px;top:188px;width:10px;background:#9CDCFE"></div>
<div class="mm" style="left:2058px;top:188px;width:1px;background:#D4D4D4"></div>
<div class="mm" style="left:2059px;top:188px;width:5px;background:#DCDCAA"></div>
<div class="mm" style="left:2064px;top:188px;width:1px;background:#D4D4D4"></div>
<div class="mm" style="left:2065px;top:188px;width:1px;background:#B5CEA8"></div>
<div class="mm" style="left:2066px;top:188px;width:1px;background:#D4D4D4"></div>
<div class="mm" style="left:2068px;top:188px;width:1px;background:#B5CEA8"></div>
<div class="mm" style="left:2069px;top:188px;width:2px;background:#D4D4D4"></div>
<div class="mm" style="left:2071px;top:188px;width:6px;background:#DCDCAA"></div>
<div class="mm" style="left:2077px;top:188px;width:1px;background:#D4D4D4"></div>
<div class="mm" style="left:2078px;top:188px;width:5px;background:#9CDCFE"></div>
<div class="mm" style="left:2084px;top:188px;width:2px;background:#D4D4D4"></div>
<div class="mm" style="left:2087px;top:188px;width:3px;background:#569CD6"></div>
<div class="mm" style="left:2091px;top:188px;width:15px;background:#4EC9B0"></div>
<div class="mm" style="left:2041px;top:190px;width:1px;background:#D4D4D4"></div>
<div class="mm" style="left:2045px;top:192px;width:4px;background:#9CDCFE"></div>
<div class="mm" style="left:2050px;top:192px;width:1px;background:#D4D4D4"></div>
<div class="mm" style="left:2052px;top:192px;width:8px;background:#9CDCFE"></div>
<div class="mm" style="left:2060px;top:192px;width:1px;background:#D4D4D4"></div>
<div class="mm" style="left:2061px;top:192px;width:3px;background:#9CDCFE"></div>
<div class="mm" style="left:2064px;top:192px;width:1px;background:#D4D4D4"></div>
<div class="mm" style="left:2065px;top:192px;width:7px;background:#DCDCAA"></div>
<div class="mm" style="left:2072px;top:192px;width:1px;background:#D4D4D4"></div>
<div class="mm" style="left:2073px;top:192px;width:5px;background:#9CDCFE"></div>
<div class="mm" style="left:2078px;top:192px;width:2px;background:#D4D4D4"></div>
<div class="mm" style="left:2045px;top:194px;width:12px;background:#9CDCFE"></div>
<div class="mm" style="left:2058px;top:194px;width:1px;background:#D4D4D4"></div>
<div class="mm" style="left:2060px;top:194px;width:3px;background:#9CDCFE"></div>
<div class="mm" style="left:2063px;top:194px;width:1px;background:#D4D4D4"></div>
<div class="mm" style="left:2064px;top:194px;width:4px;background:#DCDCAA"></div>
<div class="mm" style="left:2068px;top:194px;width:1px;background:#D4D4D4"></div>
<div class="mm" style="left:2069px;top:194px;width:3px;background:#B5CEA8"></div>
<div class="mm" style="left:2072px;top:194px;width:1px;background:#D4D4D4"></div>
<div class="mm" style="left:2074px;top:194px;width:2px;background:#B5CEA8"></div>
<div class="mm" style="left:2076px;top:194px;width:2px;background:#D4D4D4"></div>
<div class="mm" style="left:2045px;top:196px;width:7px;background:#9CDCFE"></div>
<div class="mm" style="left:2053px;top:196px;width:1px;background:#D4D4D4"></div>
<div class="mm" style="left:2055px;top:196px;width:9px;background:#9CDCFE"></div>
<div class="mm" style="left:2064px;top:196px;width:1px;background:#D4D4D4"></div>
<div class="mm" style="left:2065px;top:196px;width:3px;background:#9CDCFE"></div>
<div class="mm" style="left:2068px;top:196px;width:1px;background:#D4D4D4"></div>
<div class="mm" style="left:2069px;top:196px;width:4px;background:#DCDCAA"></div>
<div class="mm" style="left:2073px;top:196px;width:1px;background:#D4D4D4"></div>
<div class="mm" style="left:2074px;top:196px;width:9px;background:#9CDCFE"></div>
<div class="mm" style="left:2083px;top:196px;width:1px;background:#D4D4D4"></div>
<div class="mm" style="left:2084px;top:196px;width:6px;background:#9CDCFE"></div>
<div class="mm" style="left:2090px;top:196px;width:2px;background:#D4D4D4"></div>
<div class="mm" style="left:2041px;top:198px;width:2px;background:#D4D4D4"></div>
<div class="mm" style="left:2041px;top:200px;width:1px;background:#D4D4D4"></div>
<div class="mm" style="left:2042px;top:200px;width:7px;background:#DCDCAA"></div>
<div class="mm" style="left:2049px;top:200px;width:3px;background:#D4D4D4"></div>
<div class="mm" style="left:2037px;top:202px;width:1px;background:#D4D4D4"></div>
<div class="mm" style="left:2033px;top:204px;width:1px;background:#D4D4D4"></div>
<div class="mm" style="left:2029px;top:206px;width:1px;background:#D4D4D4"></div>

<div class="abs" style="left:2141px;top:130px;width:19px;height:1232px;background:#1E1E1E"></div>
<div class="abs" style="left:2141px;top:130px;width:1.2px;height:1232px;background:#424242"></div>
<div class="abs" style="left:2141px;top:130px;width:19px;height:1px;background:#454545"></div>
<div class="abs" style="left:2142px;top:185px;width:18px;height:611px;background:#424242"></div>
<div class="abs" style="left:2141px;top:185px;width:1.2px;height:611px;background:#4f4f4f"></div>
<div class="abs" style="left:2142px;top:298px;width:18px;height:3px;background:#888888"></div>


<div class="abs" style="left:1069px;top:662px;width:569px;height:42px;background:#252526;border:1.5px solid #454545"></div>
<div class="cl" style="left:1082.5px;top:683.52px"><span class="k">class</span> <span class="t">API</span>.Controllers.WeatherForecastController</div>

<div class="abs" style="left:0;top:1363px;width:2160px;height:27px;background:#007ACC"></div>

<svg class="abs" style="left:22.5px;top:1370px" width="20" height="20" viewBox="0 0 20 20"><circle cx="10" cy="9.6" r="8.4" fill="none" stroke="#FFF" stroke-width="1.6"/><path d="M6.3 5.9 L13.7 13.3 M13.7 5.9 L6.3 13.3" stroke="#FFF" stroke-width="1.6"/></svg>
<svg class="abs" style="left:62px;top:1370px" width="22" height="20" viewBox="0 0 22 20"><path d="M11 1.8 L20 17.6 H2 Z" fill="none" stroke="#FFF" stroke-width="1.6" stroke-linejoin="round"/><path d="M11 7 V12.5" stroke="#FFF" stroke-width="1.8"/><circle cx="11" cy="15" r="1" fill="#FFF"/></svg>
<svg class="abs" style="left:123px;top:1369px" width="20" height="21" viewBox="0 0 20 21"><path d="M9.5 1.5 C12 5 16.5 8 16.5 13 A6.5 6.5 0 0 1 3.5 13 C3.5 10 5.5 8 6.5 6.5 C7 9 8 10 9 10.5 C8.5 7.5 9 4 9.5 1.5 Z M10 19.5 C8 19.5 7 18 7 16.5 C7 14.5 9 13.5 10 11.5 C11 13.5 13 14.5 13 16.5 C13 18 12 19.5 10 19.5 Z" fill="none" stroke="#FFF" stroke-width="1.4"/></svg>
<svg class="abs" style="left:166px;top:1370px" width="22" height="20" viewBox="0 0 22 20"><path d="M2.5 2.3 H9 L11 4.5 H19.5 V17.5 H2.5 Z M2.5 7.5 H19.5" fill="none" stroke="#FFF" stroke-width="1.6"/></svg>
<svg class="abs" style="left:2073px;top:1369px" width="22" height="21" viewBox="0 0 22 21"><path d="M7.5 3 H20.5 V11 H15.5 L13 13.5" fill="none" stroke="#FFF" stroke-width="1.5"/><circle cx="8" cy="12" r="3.6" fill="none" stroke="#FFF" stroke-width="1.5"/><path d="M1.5 21 Q2 16.5 8 16.5 Q14 16.5 14.5 21" fill="none" stroke="#FFF" stroke-width="1.5"/></svg>
<svg class="abs" style="left:2119px;top:1369px" width="20" height="21" viewBox="0 0 20 21"><path d="M10 2 C6 2 4.5 5 4.5 8 V13 L2.5 16.5 H17.5 L15.5 13 V8 C15.5 5 14 2 10 2 Z" fill="none" stroke="#FFF" stroke-width="1.6" stroke-linejoin="round"/><path d="M8 18.5 Q10 20.5 12 18.5" fill="none" stroke="#FFF" stroke-width="1.5"/></svg>

<div class="tx" style="left:61.95px;top:22.31px;font-size:19.3px;color:#CCCCCC;font-weight:normal;font-style:normal;transform:scaleX(1.0345);">File</div>
<div class="tx" style="left:115.95px;top:22.31px;font-size:19.3px;color:#CCCCCC;font-weight:normal;font-style:normal;transform:scaleX(1.0312);">Edit</div>
<div class="tx" style="left:172.99px;top:22.31px;font-size:19.3px;color:#CCCCCC;font-weight:normal;font-style:normal;transform:scaleX(1.0128);">Selection</div>
<div class="tx" style="left:276.99px;top:22.31px;font-size:19.3px;color:#CCCCCC;font-weight:normal;font-style:normal;transform:scaleX(0.9762);">View</div>
<div class="tx" style="left:340.62px;top:22.31px;font-size:19.3px;color:#CCCCCC;font-weight:normal;font-style:normal;transform:scaleX(0.9760);">Go</div>
<div class="tx" style="left:389.22px;top:22.31px;font-size:19.3px;color:#CCCCCC;font-weight:normal;font-style:normal;transform:scaleX(0.9848);">Run</div>
<div class="tx" style="left:448.00px;top:22.31px;font-size:19.3px;color:#CCCCCC;font-weight:normal;font-style:normal;transform:scaleX(0.9917);">Terminal</div>
<div class="tx" style="left:542.72px;top:22.31px;font-size:19.3px;color:#CCCCCC;font-weight:normal;font-style:normal;transform:scaleX(1.0526);">Help</div>
<div class="tx" style="left:825.00px;top:21.89px;font-size:18.2px;color:#CCCCCC;font-weight:normal;font-style:normal;transform:scaleX(0.9771);">WeatherForecastController.cs - hellowebapi - Visual Studio Code</div>
<div class="tx" style="left:101.25px;top:71.76px;font-size:16px;color:#BBBBBB;font-weight:normal;font-style:normal;transform:scaleX(0.8651);">EXPLORER</div>
<div class="tx" style="left:101.20px;top:114.49px;font-size:15.6px;color:#CCCCCC;font-weight:bold;font-style:normal;transform:scaleX(0.9932);">OPEN EDITORS</div>
<div class="tx" style="left:101.21px;top:147.59px;font-size:15.6px;color:#CCCCCC;font-weight:bold;font-style:normal;transform:scaleX(0.9860);">HELLOWEBAPI</div>
<div class="tx" style="left:101.20px;top:1347.73px;font-size:15.8px;color:#CCCCCC;font-weight:bold;font-style:normal;transform:scaleX(1.0087);">OUTLINE</div>
<div class="tx" style="left:154.01px;top:180.12px;font-size:19px;color:#CCCCCC;font-weight:normal;font-style:normal;transform:scaleX(0.9906);">.vscode</div>
<div class="tx" style="left:155.96px;top:213.12px;font-size:19px;color:#CCCCCC;font-weight:normal;font-style:normal;transform:scaleX(0.9233);">API</div>
<div class="tx" style="left:167.00px;top:246.12px;font-size:19px;color:#CCCCCC;font-weight:normal;font-style:normal;transform:scaleX(1.0000);">bin</div>
<div class="tx" style="left:167.00px;top:279.12px;font-size:19px;color:#CCCCCC;font-weight:normal;font-style:normal;transform:scaleX(1.0000);">Controllers</div>
<div class="tx" style="left:180.00px;top:312.12px;font-size:19px;color:#FFFFFF;font-weight:normal;font-style:normal;transform:scaleX(0.9931);">WeatherForecastContro...</div>
<div class="tx" style="left:166.72px;top:345.12px;font-size:19px;color:#CCCCCC;font-weight:normal;font-style:normal;transform:scaleX(1.1333);">obj</div>
<div class="tx" style="left:165.77px;top:378.12px;font-size:19px;color:#CCCCCC;font-weight:normal;font-style:normal;transform:scaleX(1.0212);">Properties</div>
<div class="tx" style="left:179.00px;top:411.12px;font-size:19px;color:#CCCCCC;font-weight:normal;font-style:normal;transform:scaleX(1.0055);">launchSettings.json</div>
<div class="tx" style="left:167.79px;top:444.12px;font-size:19px;color:#CCCCCC;font-weight:normal;font-style:normal;transform:scaleX(0.9756);">API.csproj</div>
<div class="tx" style="left:166.79px;top:477.12px;font-size:19px;color:#CCCCCC;font-weight:normal;font-style:normal;transform:scaleX(1.0143);">appsettings.Developmen...</div>
<div class="tx" style="left:166.79px;top:510.12px;font-size:19px;color:#CCCCCC;font-weight:normal;font-style:normal;transform:scaleX(1.0213);">appsettings.json</div>
<div class="tx" style="left:165.80px;top:543.12px;font-size:19px;color:#CCCCCC;font-weight:normal;font-style:normal;transform:scaleX(0.9989);">Program.cs</div>
<div class="tx" style="left:166.81px;top:576.12px;font-size:19px;color:#CCCCCC;font-weight:normal;font-style:normal;transform:scaleX(0.9800);">Startup.cs</div>
<div class="tx" style="left:167.79px;top:609.12px;font-size:19px;color:#CCCCCC;font-weight:normal;font-style:normal;transform:scaleX(0.9700);">WeatherForecast.cs</div>
<div class="tx" style="left:154.57px;top:642.12px;font-size:19px;color:#CCCCCC;font-weight:normal;font-style:normal;transform:scaleX(1.0266);">hellowebapi.sln</div>
<div class="tx" style="left:448.59px;top:71.12px;font-size:18.4px;color:#FFFFFF;font-weight:normal;font-style:italic;transform:scaleX(1.0116);">WeatherForecastController.cs</div>
<div class="tx" style="left:425.00px;top:114.22px;font-size:18.4px;color:#A9A9A9;font-weight:normal;font-style:normal;transform:scaleX(0.9929);">API</div>
<div class="tx" style="left:477.56px;top:114.22px;font-size:18.4px;color:#A9A9A9;font-weight:normal;font-style:normal;transform:scaleX(1.0511);">Controllers</div>
<div class="tx" style="left:629.00px;top:114.22px;font-size:18.4px;color:#A9A9A9;font-weight:normal;font-style:normal;transform:scaleX(1.0288);">WeatherForecastController.cs</div>
<div class="tx" style="left:938.01px;top:114.22px;font-size:18.4px;color:#A9A9A9;font-weight:normal;font-style:normal;transform:scaleX(1.0177);">API.Controllers</div>
<div class="tx" style="left:1121.39px;top:114.22px;font-size:18.4px;color:#A9A9A9;font-weight:normal;font-style:normal;transform:scaleX(1.0304);">API.Controllers.WeatherForecastController</div>
<div class="tx" style="left:47.60px;top:1379.71px;font-size:17px;color:#FFFFFF;font-weight:normal;font-style:normal;transform:scaleX(0.9889);">0</div>
<div class="tx" style="left:88.01px;top:1379.71px;font-size:17px;color:#FFFFFF;font-weight:normal;font-style:normal;transform:scaleX(0.9889);">0</div>
<div class="tx" style="left:192.33px;top:1379.71px;font-size:17px;color:#FFFFFF;font-weight:normal;font-style:normal;transform:scaleX(1.0526);">hellowebapi.sln</div>
<div class="tx" style="left:1480.58px;top:1379.71px;font-size:17px;color:#FFFFFF;font-weight:normal;font-style:normal;transform:scaleX(1.0208);">Ln 12, Col 33 (15 selected)</div>
<div class="tx" style="left:1711.82px;top:1379.71px;font-size:17px;color:#FFFFFF;font-weight:normal;font-style:normal;transform:scaleX(0.9653);">Spaces: 4</div>
<div class="tx" style="left:1808.97px;top:1379.71px;font-size:17px;color:#FFFFFF;font-weight:normal;font-style:normal;transform:scaleX(1.0320);">UTF-8 with BOM</div>
<div class="tx" style="left:1964.11px;top:1379.71px;font-size:17px;color:#FFFFFF;font-weight:normal;font-style:normal;transform:scaleX(0.8907);">CRLF</div>
<div class="tx" style="left:2027.01px;top:1379.71px;font-size:17px;color:#FFFFFF;font-weight:normal;font-style:normal;transform:scaleX(0.9773);">C#</div>
<div class="tx" style="left:549.39px;top:348.86px;font-size:18.6px;color:#999999;font-weight:normal;font-style:normal;transform:scaleX(1.0137);">2 references</div>
<div class="tx" style="left:595.79px;top:434.36px;font-size:18.6px;color:#999999;font-weight:normal;font-style:normal;transform:scaleX(1.0165);">2 references</div>
<div class="tx" style="left:594.74px;top:605.36px;font-size:18.6px;color:#999999;font-weight:normal;font-style:normal;transform:scaleX(1.0359);">1 reference</div>
<div class="tx" style="left:595.80px;top:690.86px;font-size:18.6px;color:#999999;font-weight:normal;font-style:normal;transform:scaleX(1.0039);">0 references</div>
<div class="tx" style="left:595.80px;top:890.36px;font-size:18.6px;color:#999999;font-weight:normal;font-style:normal;transform:scaleX(1.0029);">0 references</div>
</body></html>
